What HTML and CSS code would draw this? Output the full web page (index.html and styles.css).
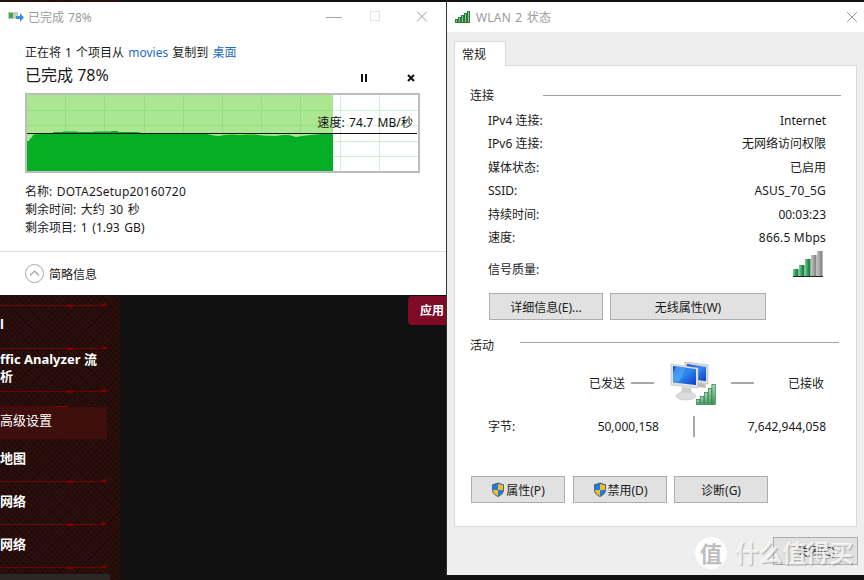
FILE: index.html
```html
<!DOCTYPE html>
<html lang="zh-CN">
<head>
<meta charset="utf-8">
<title>WLAN 2 状态</title>
<link rel="stylesheet" href="styles.css">
</head>
<body>
<svg class="defs" width="0" height="0" aria-hidden="true">
  <defs>
    <g id="menu-rule">
      <path d="M0 .5H106" stroke="#6e0000" stroke-width="1"/>
      <rect x="67" y="-.5" width="5" height="2.500" fill="#7a0000"/>
      <rect x="71.500" y="-.5" width="2" height="2.500" fill="#7a0000"/>
      <rect x="90" y="-.5" width="2" height="2" fill="#740000"/>
      <rect x="102" y="-1.500" width="4" height="2.500" fill="#860000"/>
    </g>
    <g id="shield">
      <path d="M7 .5 13 2.500V8c0 3.500-3 5.500-6 7-3-1.500-6-3.500-6-7V2.500Z" fill="#46648c"/>
      <path d="M7 2V8H2V3.300Z" fill="#1f7fd6"/>
      <path d="M7 2 12 3.300V8H7Z" fill="#f5bd2a"/>
      <path d="M7 8V14C4.500 12.800 2 11 2 8Z" fill="#f5bd2a"/>
      <path d="M7 8H12C12 11 9.500 12.800 7 14Z" fill="#1f7fd6"/>
    </g>
  </defs>
</svg>
<div class="desktop">
  <nav class="sidebar">
    <svg class="rule" width="107" height="4"><use href="#menu-rule" y="2"/></svg>
    <div class="menu-item menu-first"><span>l</span></div>
    <svg class="rule" width="107" height="4"><use href="#menu-rule" y="2"/></svg>
    <div class="menu-item menu-two">ffic Analyzer 流<br>析</div>
    <svg class="rule" width="107" height="4"><use href="#menu-rule" y="2"/></svg>
    <div class="menu-active">高级设置</div>
    <div class="menu-item menu-map">地图</div>
    <svg class="rule" width="107" height="4"><use href="#menu-rule" y="2"/></svg>
    <div class="menu-item">网络</div>
    <svg class="rule" width="107" height="4"><use href="#menu-rule" y="2"/></svg>
    <div class="menu-item">网络</div>
    <svg class="rule" width="107" height="4"><use href="#menu-rule" y="2"/></svg>
    <div class="menu-foot"></div>
  </nav>
  <div class="apply">应用</div>

  <section class="window copy-window">
    <header class="copy-title">
      <svg class="copy-icon" width="16" height="12" viewBox="0 0 16 12">
        <rect x="0" y="1" width="10" height="7" fill="#c9c9c9"/>
        <rect x="1" y="2" width="4" height="5" fill="#3cae3c"/>
        <path d="M8 5H12V2L16 6.500 12 11V8H8Z" fill="#3a8fdc"/>
      </svg>
      <span class="title-text">已完成 78%</span>
      <svg class="caption" width="102" height="12" viewBox="0 0 102 12">
        <path d="M0 6.500H16" stroke="#a6a6a6"/>
        <rect x="44.500" y=".5" width="9" height="9" fill="none" stroke="#e4e4e4"/>
        <path d="M91 .5 101 10.500M101 .5 91 10.500" stroke="#9a9a9a" fill="none"/>
      </svg>
    </header>
    <div class="copy-body">
      <p class="copy-line">正在将 1 个项目从 <span class="link">movies</span> 复制到 <span class="link">桌面</span></p>
      <div class="progress-head">
        <span class="progress-text">已完成 78%</span>
        <span class="progress-tools">
          <svg width="8" height="8" viewBox="0 0 8 8"><path d="M1 0H3V8H1ZM5 0H7V8H5Z" fill="#111"/></svg>
          <svg width="8" height="8" viewBox="0 0 8 8"><path d="M1 1 7 7M7 1 1 7" stroke="#111" stroke-width="2"/></svg>
        </span>
      </div>
      <div class="graph">
        <svg width="391" height="76" viewBox="0 0 391 76">
          <rect width="306" height="76" fill="#abe690"/>
          <g stroke="#cfefd8">
            <path d="M313.500 0V76M352.500 0V76M306 15.500H391M306 30.500H391M306 46.500H391M306 61.500H391"/>
          </g>
          <g stroke="#92e07e">
            <path d="M38.500 0V76M77.500 0V76M117.500 0V76M156.500 0V76M195.500 0V76M234.500 0V76M273.500 0V76M0 15.500H306M0 30.500H306"/>
          </g>
          <path d="M0 76V46H2L3 44 5 42 6 40 9 39 11 38H26V37H36V36.500H50V37H66L67 36.500H84V36H91V37H110L115 38H178L180 39 187 40.500 192 41 197 40 205 39.500 213 40 220 39.500 228 39.500 235 40.500 248 41 256 40 262 40 269 42 275 41 284 40 294 39 300 38.500 306 39V76Z" fill="#06ae26"/>
          <path d="M0 38.500H390" stroke="#111"/>
          <foreignObject x="270" y="18" width="116" height="20">
            <div class="speed">速度: 74.7 MB/秒</div>
          </foreignObject>
        </svg>
      </div>
      <div class="details">
        <div>名称: <span class="wide">DOTA2Setup20160720</span></div>
        <div>剩余时间: 大约 30 秒</div>
        <div>剩余项目: 1 (1.93 GB)</div>
      </div>
    </div>
    <footer class="copy-foot">
      <svg width="19" height="19" viewBox="0 0 19 19">
        <circle cx="9.500" cy="9.500" r="9" fill="#fff" stroke="#a8a8a8"/>
        <path d="M5 11.500 9.500 7 14 11.500" fill="none" stroke="#a0a0a0" stroke-width="1.200"/>
      </svg>
      <span>简略信息</span>
    </footer>
  </section>

  <section class="window wlan-window">
    <header class="wlan-title">
      <svg width="16" height="12" viewBox="0 0 16 12">
        <g fill="#7fc48a" stroke="#2f7a3c" stroke-width="1">
          <rect x=".5" y="8.500" width="2" height="3"/>
          <rect x="3.500" y="6.500" width="2" height="5"/>
          <rect x="6.500" y="4.500" width="2" height="7"/>
          <rect x="9.500" y="2.500" width="2" height="9"/>
          <rect x="12.500" y=".5" width="2" height="11"/>
        </g>
      </svg>
      <span class="title-text">WLAN 2 状态</span>
      <svg class="caption" width="10" height="10" viewBox="0 0 10 10"><path d="M0 0 10 10M10 0 0 10" stroke="#9a9a9a" fill="none"/></svg>
    </header>
    <div class="wlan-body">
      <div class="tab">常规</div>
      <div class="panel">
        <div class="section section-conn"><span>连接</span><i></i></div>
        <ul class="rows">
          <li><span>IPv4 连接:</span><span>Internet</span></li>
          <li><span>IPv6 连接:</span><span>无网络访问权限</span></li>
          <li><span>媒体状态:</span><span>已启用</span></li>
          <li><span>SSID:</span><span class="wide">ASUS_70_5G</span></li>
          <li><span>持续时间:</span><span>00:03:23</span></li>
          <li><span>速度:</span><span class="wide">866.5 Mbps</span></li>
          <li class="signal-row"><span>信号质量:</span>
            <svg width="30" height="26" viewBox="0 0 30 26">
              <defs>
                <linearGradient id="bar-g" x1="0" x2="1" y1="0" y2="0"><stop offset="0" stop-color="#7fd09a"/><stop offset=".5" stop-color="#2c9a55"/><stop offset="1" stop-color="#12703a"/></linearGradient>
                <linearGradient id="bar-s" x1="0" x2="1" y1="0" y2="0"><stop offset="0" stop-color="#c4c4c4"/><stop offset=".5" stop-color="#a0a0a0"/><stop offset="1" stop-color="#7a7a7a"/></linearGradient>
              </defs>
              <rect x="0" y="18" width="5.500" height="7" fill="url(#bar-g)"/>
              <rect x="6" y="14" width="5.500" height="11" fill="url(#bar-g)"/>
              <rect x="12" y="8" width="5.500" height="17" fill="url(#bar-g)"/>
              <rect x="18" y="4" width="5.500" height="21" fill="url(#bar-s)"/>
              <rect x="24" y="0" width="5.500" height="25" fill="url(#bar-s)"/>
              <path d="M0 25.500H30" stroke="#222"/>
            </svg>
          </li>
        </ul>
        <div class="btn-row top-btns">
          <button class="btn btn-detail">详细信息(E)...</button>
          <button class="btn btn-wifi">无线属性(W)</button>
        </div>
        <div class="section section-act"><span>活动</span><i></i></div>
        <div class="activity">
          <span class="act-label">已发送</span>
          <i class="dash"></i>
          <svg class="net-icon" width="46" height="44" viewBox="0 0 46 44">
            <defs>
              <linearGradient id="screen" x1="0" y1="0" x2="1" y2="1"><stop offset="0" stop-color="#0b45d8"/><stop offset=".45" stop-color="#2f8cf0"/><stop offset="1" stop-color="#0a3bc4"/></linearGradient>
              <linearGradient id="sig" x1="0" y1="0" x2="0" y2="1"><stop offset="0" stop-color="#a8dcb4"/><stop offset="1" stop-color="#3f9a5a"/></linearGradient>
            </defs>
            <path d="M15 1 38 4V23L15 21Z" fill="#d8d8d8" stroke="#b5b5b5" stroke-width=".6"/>
            <path d="M17 3 36 6V20L17 18Z" fill="url(#screen)"/>
            <path d="M28 22 35 23 36 27 28 26Z" fill="#bbb"/>
            <path d="M1 3 28 7V27L1 24Z" fill="#e2e2e2" stroke="#b5b5b5" stroke-width=".6"/>
            <path d="M3 5 26 8V24L3 21.500Z" fill="url(#screen)"/>
            <path d="M6 5 16 6.500 9 21 3 20.500V12Z" fill="#5db0f6" opacity=".6"/>
            <path d="M12 26 21 27 22 32H11Z" fill="#cfcfcf"/>
            <ellipse cx="16" cy="35" rx="10" ry="4" fill="#dcdcdc" stroke="#c4c4c4" stroke-width=".6"/>
            <g fill="url(#sig)" stroke="#2f7a4a" stroke-width=".7">
              <rect x="26.400" y="38.400" width="3.400" height="5"/>
              <rect x="30.400" y="35.400" width="3.400" height="8"/>
              <rect x="34.400" y="31.400" width="3.400" height="12"/>
              <rect x="38.400" y="27.400" width="3.400" height="16"/>
              <rect x="41.900" y="23.400" width="3.400" height="20"/>
            </g>
          </svg>
          <i class="dash dash-r"></i>
          <span class="act-label act-in">已接收</span>
        </div>
        <div class="bytes">
          <span class="bytes-label">字节:</span>
          <span class="bytes-sent">50,000,158</span>
          <i class="divider"></i>
          <span class="bytes-recv">7,642,944,058</span>
        </div>
        <div class="btn-row low-btns">
          <button class="btn btn-low"><svg width="14" height="16" viewBox="0 0 14 16"><use href="#shield"/></svg>属性(P)</button>
          <button class="btn btn-low"><svg width="14" height="16" viewBox="0 0 14 16"><use href="#shield"/></svg>禁用(D)</button>
          <button class="btn btn-low">诊断(G)</button>
        </div>
      </div>
      <div class="close-row"><button class="btn btn-close">关闭(C)</button></div>
    </div>
  </section>

  <div class="watermark">
    <span class="wm-badge">值</span>
    <span class="wm-text">什么值得买</span>
  </div>
</div>
</body>
</html>
```
FILE: styles.css
```css
* { box-sizing: border-box; }
html, body { margin: 0; padding: 0; background: #111; }
body { font-family: "Noto Sans", "Noto Sans CJK SC", sans-serif; font-size: 12px; color: #1a1a1a; }
.defs { position: absolute; }
.desktop { position: relative; width: 864px; height: 580px; overflow: hidden; background: #111; }

/* router page behind the windows */
.sidebar {
  width: 120px; height: 580px; padding-top: 303px; display: flex; flex-direction: column;
  background-color: #2a0f0c;
  background-image:
    repeating-linear-gradient(45deg, rgba(0,0,0,.22) 0 1px, transparent 1px 4px),
    repeating-linear-gradient(-45deg, rgba(0,0,0,.22) 0 1px, transparent 1px 4px);
  color: #fff; font-weight: 700; font-size: 13px;
}
.rule { display: block; flex: none; }
.menu-item { height: 39px; padding-top: 10px; line-height: 17px; white-space: nowrap; flex: none; }
.menu-first { padding-top: 9px; }
.menu-two { padding-top: 1px; }
.menu-active { position: relative; flex: none; height: 32px; margin: 14px 13px 0 0; background: #3e0f0d; font-weight: 400; font-size: 13px; line-height: 26px; }
.menu-active::before { content: ""; position: absolute; left: 0; top: -1px; width: 68px; height: 1px; background: linear-gradient(90deg, #5a0000 0 82%, #990000 82%); }
.menu-item.menu-map { height: 40px; padding-top: 11px; }
.menu-foot { margin-top: 5px; width: 110px; height: 6px; background: #2c2624; flex: none; }
.apply { position: absolute; left: 408px; top: 296px; width: 38px; height: 29px; overflow: hidden; background: #7e0a26; border-radius: 4px 0 0 4px; color: #fff; font-weight: 700; line-height: 29px; padding-left: 12px; white-space: nowrap; }

/* windows */
.window { position: absolute; top: 2px; display: flex; flex-direction: column; }
.title-text { color: #9b9b9b; font-size: 12px; word-spacing: 1px; }
.caption { margin-left: auto; }
.wide { letter-spacing: .2px; }

.copy-window { left: 0; width: 446px; height: 293px; background: #fff; box-shadow: 1px 0 0 #e8e8e8; }
.copy-title { height: 30px; display: flex; align-items: center; padding: 0 18px 0 8px; gap: 4px; }
.copy-body { padding: 11px 26px 0 25px; flex: 1; }
.copy-line { margin: 0; line-height: 20px; height: 20px; word-spacing: 1px; }
.link { color: #1a6dc4; }
.progress-head { display: flex; align-items: center; justify-content: space-between; height: 23px; margin-bottom: 7px; padding-top: 0; }
.progress-text { font-size: 16px; line-height: 22px; }
.progress-tools { display: flex; gap: 39px; padding-right: 5px; padding-top: 6px; }
.graph { width: 395px; height: 80px; border: 2px solid #bcbcbc; background: #fff; }
.graph svg { display: block; }
.speed { font-size: 12px; line-height: 20px; color: #111; text-align: right; white-space: nowrap; word-spacing: 1px; letter-spacing: .1px; }
.details { margin: 10px 0 0; word-spacing: 1.500px; }
.details div { height: 18px; line-height: 18px; }
.copy-foot { height: 44px; border-top: 1px solid #dedede; padding-left: 25px; display: flex; align-items: center; gap: 5px; }

.wlan-window { left: 446px; width: 418px; height: 573px; background: #eee; border-left: 1px solid #333; }
.wlan-title { height: 30px; background: #fff; display: flex; align-items: center; padding: 0 7px 0 8px; gap: 5px; }
.wlan-title .title-text { letter-spacing: .2px; }
.wlan-body { flex: 1; padding: 9px 7px 0 7px; }
.tab { width: 52px; height: 25px; margin-bottom: -1px; position: relative; z-index: 1; background: #fff; border: 1px solid #d9d9d9; border-bottom: 0; padding: 5px 0 0 7px; line-height: 16px; }
.panel { height: 462px; background: #fff; border: 1px solid #d9d9d9; padding: 0 16px 0 15px; display: flex; flex-direction: column; }
.section { display: flex; align-items: center; flex: none; }
.section i { display: block; height: 1px; background: #a0a0a0; margin-left: auto; }
.section-conn { padding-top: 20px; height: 38px; }
.section-conn i { width: 298px; margin-right: -1px; }
.rows { list-style: none; margin: 5px 0 0; padding: 0 14px 0 18px; }
.rows li { display: flex; justify-content: space-between; height: 23.400px; line-height: 23px; }
.rows .signal-row { height: 37px; align-items: center; line-height: 18px; padding-top: 4px; }
.signal-row svg { margin-right: 3px; margin-top: -12px; }
.btn-row { display: flex; flex: none; }
.btn { font: inherit; color: #1a1a1a; background: #e1e1e1; border: 1px solid #adadad; padding: 0; height: 27px; display: flex; align-items: center; justify-content: center; }
.top-btns { margin: 7px 0 0 19px; gap: 7px; }
.btn-detail { width: 114px; }
.btn-wifi { width: 156px; }
.section-act { height: 18px; margin-top: 16px; }
.section-act i { width: 319px; margin-right: 1px; margin-top: -5px; }
.activity { display: flex; align-items: center; height: 44px; margin-top: 7px; padding-left: 119px; flex: none; }
.act-label { width: 36px; }
.dash { width: 23px; height: 2px; background: #a8a8a8; margin-left: 6px; }
.net-icon { margin: 0 15px 0 16px; }
.dash-r { margin-left: 0; }
.act-in { margin-left: 34px; }
.bytes { display: flex; align-items: center; height: 24px; margin-top: 9px; padding: 0 14px 0 18px; flex: none; }
.bytes-label { width: 109px; }
.bytes-sent { width: 62px; text-align: right; }
.divider { width: 2px; height: 21px; background: #a8a8a8; margin: 0 34px; }
.bytes-recv { margin-left: auto; }
.low-btns { margin: 38px 0 0 1px; gap: 8px; }
.btn-low { width: 94px; gap: 1px; }
.btn-low:last-child { margin-left: -1px; }
.close-row { display: flex; justify-content: flex-end; margin: 10px -1px 0 0; }
.btn-close { width: 85px; height: 28px; }

/* site watermark */
.watermark { position: absolute; left: 695px; top: 535px; display: flex; align-items: center; gap: 8px; height: 35px; }
.wm-badge { width: 32px; height: 32px; border-radius: 50%; background: rgba(255,255,255,.85); color: #bdbdbd; font-size: 22px; font-weight: 700; line-height: 32px; text-align: center; }
.wm-text { color: rgba(255,255,255,.78); font-size: 24px; line-height: 30px; font-weight: 700; letter-spacing: -.4px; text-shadow: 1px 1px 1px rgba(120,120,120,.55); white-space: nowrap; }
```
